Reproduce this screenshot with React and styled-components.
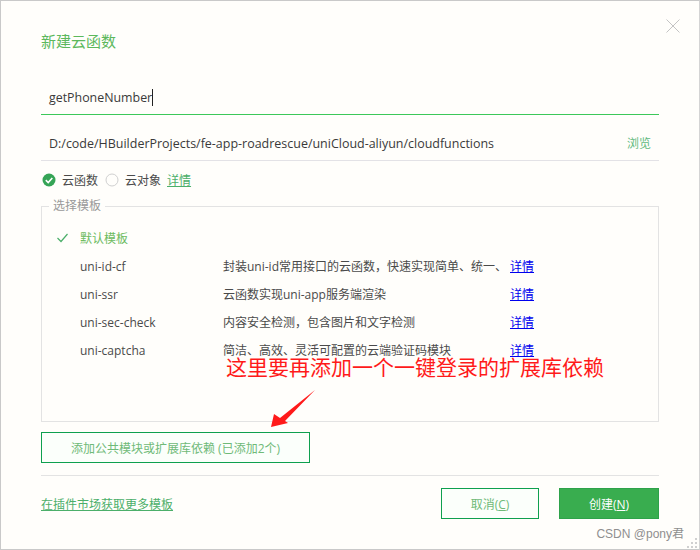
import React from 'react';
import styled, { createGlobalStyle } from 'styled-components';

const GlobalStyle = createGlobalStyle`
    html, body {
        margin: 0;
        padding: 0;
    }
    body {
        font-family: "Open Sans", "Noto Sans CJK SC", sans-serif;
    }
`;

const Window = styled.div`
    position: relative;
    box-sizing: border-box;
    width: 700px;
    height: 550px;
    padding: 20px 40px 0;
    overflow: hidden;
    background: #fffefb;
    border: 1px solid #c9c9c9;
    border-right-color: #d4d4d4;
    font-size: 12px;
    color: #444;
`;

const Close = styled.svg`
    position: absolute;
    top: 18px;
    right: 19px;
    width: 14px;
    height: 14px;
`;

const Title = styled.h1`
    height: 40px;
    margin: 0;
    font-size: 15px;
    font-weight: 400;
    line-height: 40px;
    color: #5cb85c;
`;

const NameField = styled.div`
    box-sizing: border-box;
    display: flex;
    align-items: center;
    height: 35px;
    margin-top: 19px;
    padding-left: 8px;
    border-bottom: 1px solid #3cc85a;
    font-size: 12.4px;
    color: #3a3a3a;
`;

const Caret = styled.span`
    width: 1px;
    height: 17px;
    background: #222;
`;

const PathField = styled.div`
    box-sizing: border-box;
    display: flex;
    align-items: center;
    justify-content: space-between;
    height: 46px;
    padding: 11px 8px 0;
    border-bottom: 1px solid #e3e2e6;
    font-size: 12.48px;
    color: #3a3a3a;
`;

const Browse = styled.span`
    font-size: 12px;
    color: #5fba7d;
`;

const TypeRow = styled.div`
    display: flex;
    align-items: center;
    height: 38px;
    padding-left: 1px;
    color: #4a4a4a;
`;

const RadioIcon = styled.svg`
    width: 14px;
    height: 14px;
    margin-right: ${(p) => p.$gap}px;
`;

const TypeLabel = styled.span`
    margin-right: ${(p) => p.$gap}px;
`;

const GreenLink = styled.a`
    color: #4caf6a;
    text-decoration: underline;
`;

const Templates = styled.fieldset`
    box-sizing: border-box;
    height: 223px;
    margin: 0;
    padding: 11px 0 0 15px;
    border: 1px solid #e3e3e3;
    min-width: 0;
`;

const Legend = styled.legend`
    margin-left: -8px;
    padding: 0 4px;
    font-size: 12px;
    line-height: 14px;
    color: #999;
`;

const TemplateRow = styled.div`
    display: grid;
    grid-template-columns: 23px 143px 287px auto;
    align-items: center;
    height: 28px;
    color: ${(p) => (p.$active ? '#6dbb5f' : '#4a4a4a')};
`;

const BlueLink = styled.a`
    color: #0000ee;
    text-decoration: underline;
`;

const AddButton = styled.button`
    display: block;
    box-sizing: border-box;
    width: 269px;
    height: 31px;
    margin-top: 10px;
    padding: 0;
    background: #fbfffb;
    border: 1px solid #0ea04f;
    font: inherit;
    color: #6fba78;
`;

const Divider = styled.div`
    height: 1px;
    margin-top: 12px;
    background: #e3e3e3;
`;

const Footer = styled.div`
    display: flex;
    align-items: center;
    justify-content: space-between;
    margin-top: 12px;
`;

const MarketLink = styled(GreenLink)`
    font-size: 12px;
`;

const Actions = styled.div`
    display: flex;
    gap: 20px;
`;

const Action = styled.button`
    box-sizing: border-box;
    width: ${(p) => p.$width}px;
    height: 31px;
    padding: 0;
    background: ${(p) => (p.$primary ? '#39ad4f' : '#fbfffb')};
    border: 1px solid ${(p) => (p.$primary ? '#2ea24a' : '#0ea04f')};
    font: inherit;
    color: ${(p) => (p.$primary ? '#fff' : '#6fba78')};

    u {
        text-decoration: underline;
    }
`;

const Note = styled.div`
    position: absolute;
    top: 351px;
    left: 225px;
    font-size: 21px;
    line-height: 30px;
    white-space: nowrap;
    color: #ff1a1a;
`;

const Arrow = styled.svg`
    position: absolute;
    top: 387px;
    left: 268px;
    width: 48px;
    height: 40px;
`;

const Watermark = styled.div`
    position: absolute;
    right: 15px;
    bottom: 8px;
    font-family: "Liberation Sans", "Noto Sans CJK SC", sans-serif;
    font-size: 12px;
    line-height: 14px;
    color: #8f8f8f;
`;

const Grip = styled.svg`
    position: absolute;
    right: 1px;
    bottom: 1px;
    width: 11px;
    height: 11px;
`;

const templates = [
    { name: 'uni-id-cf', text: '封装uni-id常用接口的云函数，快速实现简单、统一、' },
    { name: 'uni-ssr', text: '云函数实现uni-app服务端渲染' },
    { name: 'uni-sec-check', text: '内容安全检测，包含图片和文字检测' },
    { name: 'uni-captcha', text: '简洁、高效、灵活可配置的云端验证码模块' },
];

export default function App() {
    return (
        <Window>
            <GlobalStyle />
            <Close viewBox="0 0 14 14">
                <path d="M0.5 0.5 L13.5 13.5 M13.5 0.5 L0.5 13.5" stroke="#c4c4c4" strokeWidth="1" fill="none" />
            </Close>
            <Title>新建云函数</Title>
            <NameField>
                getPhoneNumber<Caret />
            </NameField>
            <PathField>
                D:/code/HBuilderProjects/fe-app-roadrescue/uniCloud-aliyun/cloudfunctions
                <Browse>浏览</Browse>
            </PathField>
            <TypeRow>
                <RadioIcon $gap={6} viewBox="0 0 14 14">
                    <circle cx="7" cy="7" r="6.5" fill="#35a456" />
                    <path d="M3.8 7.2 L6.2 9.5 L10.3 5" stroke="#fff" strokeWidth="1.6" fill="none" />
                </RadioIcon>
                <TypeLabel $gap={7}>云函数</TypeLabel>
                <RadioIcon $gap={6} viewBox="0 0 14 14">
                    <circle cx="7" cy="7" r="6" fill="none" stroke="#d0d0d0" />
                </RadioIcon>
                <TypeLabel $gap={6}>云对象</TypeLabel>
                <GreenLink>详情</GreenLink>
            </TypeRow>
            <Templates>
                <Legend>选择模板</Legend>
                <TemplateRow $active>
                    <svg width="11" height="10" viewBox="0 0 11 10">
                        <path d="M0.5 5 L4 8.5 L10.5 1" stroke="#4caf6a" strokeWidth="1.2" fill="none" />
                    </svg>
                    <span>默认模板</span>
                </TemplateRow>
                {templates.map((t) => (
                    <TemplateRow key={t.name}>
                        <span />
                        <span>{t.name}</span>
                        <span>{t.text}</span>
                        <BlueLink>详情</BlueLink>
                    </TemplateRow>
                ))}
            </Templates>
            <AddButton>添加公共模块或扩展库依赖 (已添加2个)</AddButton>
            <Divider />
            <Footer>
                <MarketLink>在插件市场获取更多模板</MarketLink>
                <Actions>
                    <Action $width={98}>取消(<u>C</u>)</Action>
                    <Action $width={100} $primary>创建(<u>N</u>)</Action>
                </Actions>
            </Footer>
            <Note>这里要再添加一个一键登录的扩展库依赖</Note>
            <Arrow viewBox="0 0 48 40">
                <polygon points="2,39 5,26 11,30 46,2 16,33 19,35" fill="#ff1a1a" />
            </Arrow>
            <Watermark>CSDN @pony君</Watermark>
            <Grip viewBox="0 0 11 11">
                <path d="M8 1h2v2H8z M4 5h2v2H4z M8 5h2v2H8z M0 9h2v2H0z M4 9h2v2H4z M8 9h2v2H8z" fill="#d0d0d0" />
            </Grip>
        </Window>
    );
}
